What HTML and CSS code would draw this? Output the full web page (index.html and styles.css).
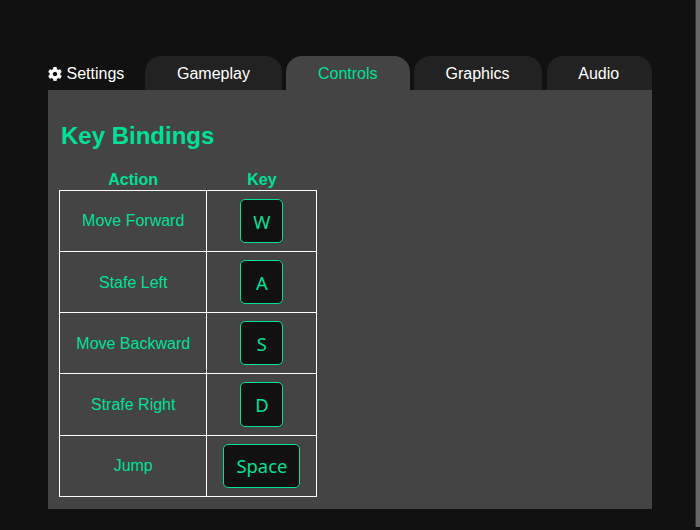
FILE: index.html
```html
<!DOCTYPE html>
<html lang="en">
<head>
<meta charset="utf-8">
<title>Settings</title>
<link rel="stylesheet" href="styles.css">
</head>
<body>
<div class="scrollbar"></div>
<main class="settings">
  <nav class="tabs">
    <div class="label">
      <svg class="gear" viewBox="14 8 484 496" aria-hidden="true"><path fill="currentColor" d="M487.4 315.7l-42.6-24.6c4.3-23.2 4.3-47 0-70.2l42.6-24.6c4.9-2.8 7.1-8.6 5.5-14-11.1-35.6-30-67.8-54.7-94.6-3.8-4.1-10-5.1-14.8-2.3L380.8 110c-17.9-15.4-38.5-27.3-60.8-35.1V25.8c0-5.6-3.9-10.5-9.4-11.7-36.7-8.2-74.3-7.8-109.2 0-5.5 1.2-9.4 6.1-9.4 11.7V75c-22.2 7.9-42.8 19.8-60.8 35.1L88.7 85.5c-4.9-2.8-11-1.9-14.8 2.3-24.7 26.7-43.6 58.9-54.7 94.6-1.7 5.4.6 11.2 5.5 14L67.3 221c-4.3 23.2-4.3 47 0 70.2l-42.6 24.6c-4.9 2.8-7.1 8.6-5.5 14 11.1 35.6 30 67.8 54.7 94.6 3.8 4.1 10 5.1 14.8 2.3l42.6-24.6c17.9 15.4 38.5 27.3 60.8 35.1v49.2c0 5.6 3.9 10.5 9.4 11.7 36.7 8.2 74.3 7.8 109.2 0 5.5-1.2 9.4-6.1 9.4-11.7v-49.2c22.2-7.9 42.8-19.8 60.8-35.1l42.6 24.6c4.9 2.8 11 1.9 14.8-2.3 24.7-26.7 43.6-58.9 54.7-94.6 1.5-5.5-.7-11.3-5.6-14.1zM256 336c-44.1 0-80-35.9-80-80s35.9-80 80-80 80 35.9 80 80-35.9 80-80 80z"/></svg>
      <span>Settings</span>
    </div>
    <div class="tab">Gameplay</div>
    <div class="tab active">Controls</div>
    <div class="tab">Graphics</div>
    <div class="tab last">Audio</div>
  </nav>
  <section class="panel">
    <h2 class="title">Key Bindings</h2>
    <table class="bindings">
      <thead>
        <tr><th>Action</th><th>Key</th></tr>
      </thead>
      <tbody>
        <tr><td class="action">Move Forward</td><td class="binding"><button class="key">W</button></td></tr>
        <tr><td class="action">Stafe Left</td><td class="binding"><button class="key">A</button></td></tr>
        <tr><td class="action">Move Backward</td><td class="binding"><button class="key">S</button></td></tr>
        <tr><td class="action">Strafe Right</td><td class="binding"><button class="key">D</button></td></tr>
        <tr><td class="action">Jump</td><td class="binding"><button class="key">Space</button></td></tr>
      </tbody>
    </table>
  </section>
</main>
</body>
</html>
```
FILE: styles.css
```css
html, body {
  margin: 0;
  height: 530px;
  overflow: hidden;
  background: #111;
  font-family: "Liberation Sans", Arial, sans-serif;
  font-size: 16px;
}
.scrollbar {
  position: fixed;
  top: 0;
  right: 0;
  width: 5px;
  height: 527px;
  background: #666;
  border-left: 1px solid #333;
  box-sizing: border-box;
}
.settings {
  width: 604px;
  margin-left: 48px;
  padding-top: 56px;
}
.tabs {
  display: flex;
  align-items: stretch;
  height: 34px;
  gap: 4px;
}
.label {
  display: flex;
  align-items: center;
  gap: 4.5px;
  width: 93px;
  padding-top: 1px;
  color: #fff;
  box-sizing: border-box;
}
.gear {
  width: 14px;
  height: 14px;
  flex: none;
}
.tab {
  display: flex;
  align-items: center;
  justify-content: center;
  padding: 1px 32px 0;
  background: #222;
  color: #fff;
  border-radius: 16px 16px 0 0;
}
.tab.last {
  flex: 1;
  margin-left: 1px;
  padding-left: 0;
  padding-right: 1px;
}
.tab.active {
  background: #444;
  color: #00e096;
}
.panel {
  height: 419px;
  box-sizing: border-box;
  background: #444;
  padding: 32px 11px 0;
  color: #00e096;
}
.title {
  margin: 0 2px 20px;
  font-size: 24px;
  line-height: 28px;
  font-weight: bold;
}
.bindings {
  border-collapse: collapse;
  color: #00e096;
}
.bindings th {
  font-weight: bold;
  padding: 0 0 1px;
  line-height: 19px;
  text-align: center;
}
.bindings td {
  border: 1px solid #fff;
  text-align: center;
}
.action {
  padding: 8.4px 16.3px 7.6px;
}
.binding {
  padding: 8px 16px;
}
.key {
  display: block;
  margin: 0 auto;
  min-width: 43px;
  height: 44.15px;
  padding: 0 12px;
  box-sizing: border-box;
  font-family: "Noto Sans", sans-serif;
  font-size: 18.4px;
  color: #00e096;
  background: #111;
  border: 1px solid #00e096;
  border-radius: 5px;
}
```
